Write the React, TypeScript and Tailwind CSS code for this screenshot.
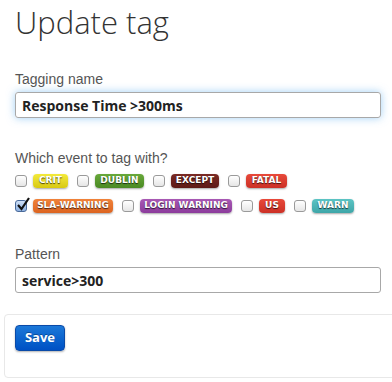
import { useState } from 'react';

type Tag = { name: string; className: string; checked?: boolean };

const tags: Tag[] = [
  { name: 'CRIT', className: 'bg-gradient-to-b from-[#f3ea3a] to-[#d8c90f] w-[35px]' },
  { name: 'DUBLIN', className: 'bg-gradient-to-b from-[#68a83a] to-[#4a8a24] w-[49px]' },
  { name: 'EXCEPT', className: 'bg-gradient-to-b from-[#7a2a24] to-[#5e1a16] w-[48px]' },
  { name: 'FATAL', className: 'bg-gradient-to-b from-[#e8493a] to-[#cc3026] w-[41px]' },
  { name: 'SLA-WARNING', className: 'bg-gradient-to-b from-[#f0823a] to-[#dc6420] w-[80px]', checked: true },
  { name: 'LOGIN WARNING', className: 'bg-gradient-to-b from-[#a858b4] to-[#8c3c9c] w-[92px]' },
  { name: 'US', className: 'bg-gradient-to-b from-[#e8493a] to-[#cc3026] w-[26px]' },
  { name: 'WARN', className: 'bg-gradient-to-b from-[#5cc4c4] to-[#3ea6a8] w-[42px]' },
];

function Checkbox({ checked, onChange }: { checked: boolean; onChange: () => void }) {
  return (
    <button
      type="button"
      onClick={onChange}
      className={`relative w-[12px] h-[12px] rounded-[3px] border shrink-0 ${
        checked
          ? 'border-[#4a6a9a] bg-gradient-to-b from-[#cfe0f6] to-[#8fb2e2]'
          : 'border-[#9a9a9a] bg-gradient-to-b from-white to-[#e6e6e6]'
      }`}
    >
      {checked && (
        <svg viewBox="0 0 14 14" className="absolute left-[0px] top-[-4px] w-[14px] h-[14px]">
          <path d="M2 8 L5.5 12 L13 1" fill="none" stroke="#111" strokeWidth="2.2" />
        </svg>
      )}
    </button>
  );
}

export default function App() {
  const [name, setName] = useState('Response Time >300ms');
  const [pattern, setPattern] = useState('service>300');
  const [selected, setSelected] = useState<string[]>(['SLA-WARNING']);

  const toggle = (t: string) =>
    setSelected((s) => (s.includes(t) ? s.filter((x) => x !== t) : [...s, t]));

  return (
    <div className="w-[392px] h-[382px] bg-white overflow-hidden pl-[15px] pt-[4px]">
      <h1 className="text-[31px] leading-[36px] font-light text-[#333] font-['Open_Sans',sans-serif]">
        Update tag
      </h1>

      <form onSubmit={(e) => e.preventDefault()} className="font-['Liberation_Sans',Arial,sans-serif]">
        <label className="block mt-[29px] text-[14px] leading-[20px] text-[#555]">Tagging name</label>
        <input
          value={name}
          onChange={(e) => setName(e.target.value)}
          className="mt-[3px] block w-[366px] h-[26px] px-[6px] rounded-[3px] border border-[#a8a8a8] text-[14px] font-bold text-[#222] font-['Open_Sans',sans-serif] shadow-[0_0_8px_rgba(82,168,236,0.55)] outline-none"
        />

        <label className="block mt-[30px] text-[14px] leading-[20px] text-[#555]">Which event to tag with?</label>
        <div className="mt-[6px] w-[370px] flex flex-wrap gap-y-[11px]">
          {tags.map((t) => (
            <div key={t.name} className="flex items-center h-[14px] mr-[9px]">
              <Checkbox checked={selected.includes(t.name)} onChange={() => toggle(t.name)} />
              <span
                className={`ml-[6px] h-[14px] rounded-[4px] flex items-center justify-center text-[9px] font-bold text-white font-['DejaVu_Sans',Verdana,sans-serif] [text-shadow:0_1px_1px_rgba(0,0,0,0.7)] shadow-[0_1px_2px_rgba(0,0,0,0.35)] ${t.className}`}
              >
                {t.name}
              </span>
            </div>
          ))}
        </div>

        <label className="block mt-[31px] text-[14px] leading-[20px] text-[#555]">Pattern</label>
        <input
          value={pattern}
          onChange={(e) => setPattern(e.target.value)}
          className="mt-[3px] block w-[366px] h-[26px] px-[6px] rounded-[3px] border border-[#a8a8a8] text-[14px] font-bold text-[#222] font-['Open_Sans',sans-serif] outline-none"
        />

        <div className="-ml-[11px] mt-[21px] w-[420px] h-[64px] rounded-[4px] border border-[#e8e8e8] bg-white pl-[10px] pt-[10px]">
          <button
            type="submit"
            className="w-[50px] h-[26px] rounded-[4px] bg-gradient-to-b from-[#1c78d8] to-[#0050c4] border border-[#0a4aa8] text-white text-[13px] font-bold font-['Open_Sans',sans-serif] [text-shadow:0_-1px_0_rgba(0,0,0,0.3)] shadow-[0_1px_2px_rgba(0,0,0,0.3)]"
          >
            Save
          </button>
        </div>
      </form>
    </div>
  );
}
